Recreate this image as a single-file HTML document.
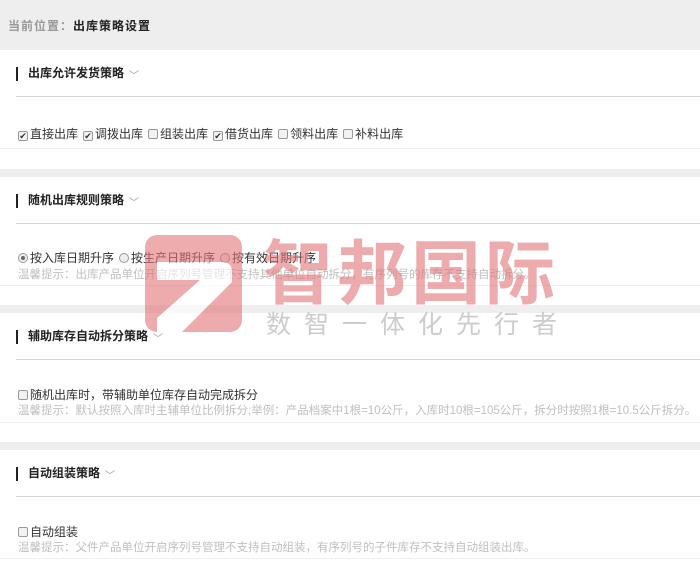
<!DOCTYPE html>
<html><head><meta charset="utf-8"><style>
*{margin:0;padding:0;box-sizing:border-box}
body{width:700px;height:570px;background:#fff;font-family:"Liberation Sans","Noto Sans CJK SC",sans-serif;font-size:12px;color:#333;position:relative;overflow:hidden}
.a{position:absolute;white-space:nowrap}
.band{position:absolute;left:0;width:700px;background:#eeeeee}
.hl{position:absolute;left:16px;right:0;height:1px;background:#d6d6d6}
.bl{position:absolute;left:0;right:0;height:1px;background:#efefef}
.t{position:absolute;left:16px;font-size:12px;font-weight:bold;color:#222;border-left:2px solid #222;padding-left:10px;line-height:12px}
.t span{color:#999;font-weight:normal;font-size:10px;margin-left:5px;position:relative;top:2px}
.cb{display:inline-block;width:10px;height:10px;border:1px solid #999;border-radius:2px;background:#f2f2f2;vertical-align:-1px;margin-right:2px;font-size:9px;line-height:8px;text-align:center;color:#333;font-style:normal}
.rd{display:inline-block;width:10px;height:10px;border:1px solid #999;border-radius:50%;background:#eee;vertical-align:-1px;margin-right:2px;position:relative}
.rd.on::after{content:"";position:absolute;left:2px;top:2px;width:4px;height:4px;border-radius:50%;background:#666}
.opt{margin-right:5px}
.tip{color:#c0c0c0;font-size:11.5px}
</style></head><body>
<div class="band" style="top:0;height:50px"></div>
<div class="a" style="left:8px;top:17px;font-size:12px;color:#999;font-weight:bold;letter-spacing:1px">当前位置：<span style="color:#222">出库策略设置</span></div>

<div class="t" style="top:67px">出库允许发货策略<span>﹀</span></div>
<div class="hl" style="top:96px"></div>
<div class="a" style="left:18px;top:125px"><span class="opt"><i class="cb">✔</i>直接出库</span><span class="opt"><i class="cb">✔</i>调拨出库</span><span class="opt"><i class="cb"></i>组装出库</span><span class="opt"><i class="cb">✔</i>借货出库</span><span class="opt"><i class="cb"></i>领料出库</span><span class="opt"><i class="cb"></i>补料出库</span></div>
<div class="bl" style="top:148px"></div>
<div class="band" style="top:169px;height:8px"></div>

<div class="t" style="top:194px">随机出库规则策略<span>﹀</span></div>
<div class="hl" style="top:223px"></div>
<div class="a" style="left:18px;top:249px"><span class="opt"><i class="rd on"></i>按入库日期升序</span><span class="opt"><i class="rd"></i>按生产日期升序</span><span class="opt"><i class="rd"></i>按有效日期升序</span></div>
<div class="a tip" style="left:18px;top:266px">温馨提示：出库产品单位开启序列号管理不支持其他单位自动拆分，有序列号的库存不支持自动拆分。</div>
<div class="bl" style="top:285px"></div>
<div class="band" style="top:305px;height:8px"></div>

<div class="t" style="top:330px">辅助库存自动拆分策略<span>﹀</span></div>
<div class="hl" style="top:359px"></div>
<div class="a" style="left:18px;top:386px"><i class="cb"></i>随机出库时，带辅助单位库存自动完成拆分</div>
<div class="a tip" style="left:18px;top:402px">温馨提示：默认按照入库时主辅单位比例拆分;举例：产品档案中1根=10公斤，入库时10根=105公斤，拆分时按照1根=10.5公斤拆分。</div>
<div class="bl" style="top:422px"></div>
<div class="band" style="top:442px;height:8px"></div>

<div class="t" style="top:467px">自动组装策略<span>﹀</span></div>
<div class="hl" style="top:496px"></div>
<div class="a" style="left:18px;top:523px"><i class="cb"></i>自动组装</div>
<div class="a tip" style="left:18px;top:539px">温馨提示：父件产品单位开启序列号管理不支持自动组装，有序列号的子件库存不支持自动组装出库。</div>
<div class="bl" style="top:558px"></div>

<svg class="a" style="left:0;top:0" width="700" height="570">
<defs><clipPath id="c"><rect x="145" y="235" width="97" height="97" rx="12"/></clipPath></defs>
<g opacity="0.6">
<rect x="145" y="235" width="97" height="97" rx="12" fill="#e27479"/>
<path clip-path="url(#c)" d="M157 262 H222 Q232 262 232 272 V282 L178 336 H157 V318 L200 280 H157 Z" fill="#fff"/>
<text x="263" y="298" font-family="Noto Sans CJK SC,sans-serif" font-size="70" font-weight="bold" fill="#e27479" letter-spacing="4">智邦国际</text>
</g>
<text x="266" y="333" font-family="Noto Sans CJK SC,sans-serif" font-size="25" fill="#c4c4c4" opacity="0.85" letter-spacing="13">数智一体化先行者</text>
</svg>
</body></html>
